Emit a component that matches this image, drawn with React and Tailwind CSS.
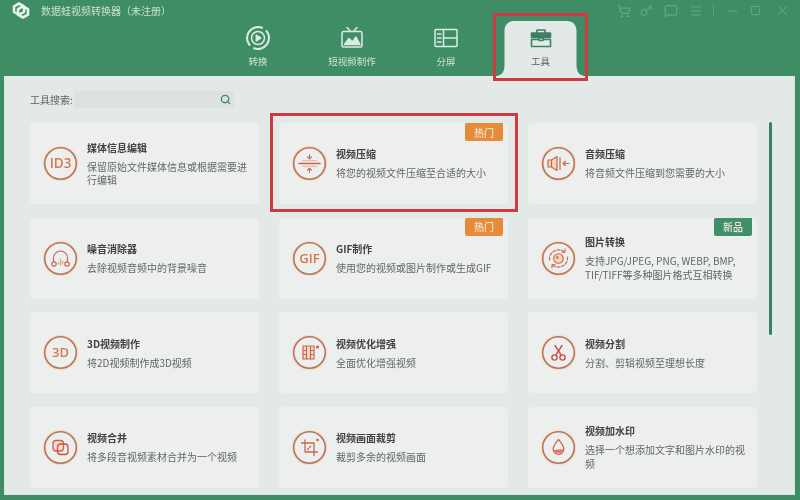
import React from "react";
import { Search, ShoppingCart, Key, MessageSquare, Menu, Minus, Square, X } from "lucide-react";

const R = "#c8684a";
const Ring = ({ children }) => (
  <svg width="37" height="37" viewBox="0 0 37 37" fill="none" className="shrink-0">
    <circle cx="18.5" cy="18.5" r="17" stroke="#f8dcc8" strokeWidth="1.6" />
    <circle cx="18.5" cy="18.5" r="15.8" stroke="#b3795d" strokeWidth="1.6" />
    {children}
  </svg>
);
const Label = ({ t, size = 12 }) => (
  <text x="18.5" y="23" textAnchor="middle" fontSize={size} fontWeight="600" fill="#cf7b4b" fontFamily="'Open Sans', sans-serif">{t}</text>
);
const icons = {
  id3: <Label t="ID3" size={13.5} />,
  gif: <Label t="GIF" size={13} />,
  d3: <Label t="3D" size={13} />,
  compress: (
    <g stroke={R} strokeWidth="1.1" strokeLinecap="round" strokeLinejoin="round">
      <path d="M8 18.5h21" strokeWidth="1.4" />
      <path d="M11.500 15.800h14M11.500 21.200h14" stroke="#e9b08f" />
      <path d="M18.500 9.500v4M16.500 11.800l2 2 2-2M18.500 27.500v-4M16.500 25.200l2-2 2 2" />
    </g>
  ),
  audio: (
    <g stroke={R} strokeWidth="1.2" strokeLinecap="round" strokeLinejoin="round">
      <path d="M8 15h3.500v7H8zM11.500 15l5.500-3.500v14L11.500 22" fill="#f4d3bf" />
      <path d="M20 12.500v12" />
      <path d="M29 18.500h-6M25.500 16.300l-2.500 2.200 2.500 2.200" />
    </g>
  ),
  noise: (
    <g stroke={R} strokeWidth="1.2" strokeLinecap="round" strokeLinejoin="round">
      <path d="M11.500 21v-3a7 7 0 0 1 14 0v3" />
      <circle cx="12" cy="24" r="2.200" /><circle cx="25" cy="24" r="2.200" />
      <path d="M18.500 19v6M16.500 22.500v1.500M20.500 21v3" stroke="#e0a080" />
    </g>
  ),
  image: (
    <g stroke={R} strokeWidth="1.1" strokeLinecap="round" strokeLinejoin="round">
      <path d="M9.500 20a9.200 9.200 0 0 1 15-8M27.500 17a9.200 9.200 0 0 1-15 8" strokeDasharray="3 1.500" />
      <path d="M25 9v3.200h-3.200M12 28v-3.200h3.200" />
      <circle cx="18.500" cy="18.500" r="4.800" fill="#f4d3bf" />
      <circle cx="17.300" cy="17.500" r="0.800" />
    </g>
  ),
  enhance: (
    <g stroke={R} strokeWidth="1.2" strokeLinejoin="round">
      <path d="M12 12h11v13H12zM15.500 12v13M19.500 12v13M12 16.500h3.500M12 20.500h3.500M19.500 16.500H23M19.500 20.500H23" fill="#f7dccb" />
      <circle cx="26.500" cy="13" r="1" fill={R} />
    </g>
  ),
  cut: (
    <g stroke="#cc4f45" strokeWidth="1.4" strokeLinecap="round">
      <circle cx="14.500" cy="23.500" r="2.600" /><circle cx="22.500" cy="23.500" r="2.600" />
      <path d="M15.800 21.200L22 11.500M21.200 21.200L15 11.500" />
    </g>
  ),
  merge: (
    <g stroke={R} strokeWidth="1.3">
      <rect x="11" y="11.500" width="10.500" height="10.500" rx="3" fill="#f7dccb" />
      <rect x="15.500" y="15" width="10.500" height="10.500" rx="3" stroke="#cc4f45" />
    </g>
  ),
  crop: (
    <g stroke={R} strokeWidth="1.3" strokeLinecap="round" strokeLinejoin="round">
      <path d="M14 11v12h12.500M10.500 14H23v12.500" />
      <path d="M16.500 20.500l4-4" strokeDasharray="1.500 1.500" />
      <circle cx="26.500" cy="11" r="0.700" fill={R} />
    </g>
  ),
  drop: (
    <g strokeLinejoin="round">
      <path d="M18.500 10.500c2.800 3.700 5.300 6.300 5.300 9.500a5.300 5.300 0 0 1-10.600 0c0-3.200 2.500-5.800 5.300-9.500z" stroke={R} strokeWidth="1.3" />
      <path d="M13.500 20.500c1.800 1.300 3.500.2 5 0s3.300.5 4.900-.2a5.200 5.200 0 0 1-9.900.2z" fill="#dc7468" />
    </g>
  ),
};

const cards = [
  { i: "id3", t: "媒体信息编辑", d: "保留原始文件媒体信息或根据需要进行编辑" },
  { i: "compress", t: "视频压缩", d: "将您的视频文件压缩至合适的大小", b: "热门", frame: true },
  { i: "audio", t: "音频压缩", d: "将音频文件压缩到您需要的大小" },
  { i: "noise", t: "噪音消除器", d: "去除视频音频中的背景噪音" },
  { i: "gif", t: "GIF制作", d: "使用您的视频或图片制作或生成GIF", b: "热门" },
  { i: "image", t: "图片转换", d: "支持JPG/JPEG, PNG, WEBP, BMP, TIF/TIFF等多种图片格式互相转换", b: "新品", green: true },
  { i: "d3", t: "3D视频制作", d: "将2D视频制作成3D视频" },
  { i: "enhance", t: "视频优化增强", d: "全面优化增强视频" },
  { i: "cut", t: "视频分割", d: "分割、剪辑视频至理想长度" },
  { i: "merge", t: "视频合并", d: "将多段音视频素材合并为一个视频" },
  { i: "crop", t: "视频画面裁剪", d: "裁剪多余的视频画面" },
  { i: "drop", t: "视频加水印", d: "选择一个想添加文字和图片水印的视频" },
];

const Card = ({ c }) => (
  <div className="relative flex items-center gap-[8px] pl-[12px] bg-[#edeeee] rounded-[4px]">
    <Ring>{icons[c.i]}</Ring>
    <div className="w-[163px]">
      <div className="text-[10px] leading-[14px] font-bold text-[#404342] mb-[5px]">{c.t}</div>
      <div className="text-[10px] leading-[13.500px] text-[#626766]">{c.d}</div>
    </div>
    {c.b && (
      <div className={`absolute top-0 right-[5px] w-[38px] h-[18px] rounded-b-[2px] rounded-tl-[2px] flex items-center justify-center text-[10px] font-medium text-[#f6e7d8] ${c.green ? "bg-[#3f9068]" : "bg-[#e58b3a]"}`}>{c.b}</div>
    )}
    {c.frame && <div className="absolute -left-[9px] -right-[10px] -top-[10px] -bottom-[8px] border-[3px] border-[#cd3a42]" />}
  </div>
);

const stroke = { fill: "none", stroke: "#dcebe3", strokeWidth: 1.5, strokeLinecap: "round", strokeLinejoin: "round" };

const tabs = [
  {
    l: "转换",
    s: (
      <svg width="26" height="26" viewBox="0 0 26 26" {...stroke}>
        <path d="M4.500 20A11 11 0 0 1 17 2.800M21.500 6A11 11 0 0 1 9 23.200" strokeWidth="2" />
        <circle cx="13" cy="13" r="6.500" />
        <path d="M11.300 10.200l4.400 2.800-4.400 2.800z" fill="#dcebe3" />
      </svg>
    ),
  },
  {
    l: "短视频制作",
    s: (
      <svg width="24" height="24" viewBox="0 0 24 24" {...stroke}>
        <rect x="2" y="5.500" width="20" height="15.500" rx="1.500" />
        <path d="M7 1.500l3.500 4M17 1.500l-3.500 4" />
        <path d="M4.500 18.500l4.500-6 3.500 3.500 3.500-5 4 7.500z" fill="#dcebe3" />
      </svg>
    ),
  },
  {
    l: "分屏",
    s: (
      <svg width="24" height="20" viewBox="0 0 24 20" {...stroke}>
        <rect x="1" y="1.500" width="22" height="17" rx="1" />
        <path d="M9.500 1.500v17M9.500 10H23M3.500 6h3.500M3.500 10h3.500M3.500 14h3.500" />
      </svg>
    ),
  },
];

export default function App() {
  return (
    <div className="w-[800px] h-[500px] overflow-hidden bg-[#3f8d64] blur-[0.5px] font-['Noto_Sans_CJK_SC','Noto_Sans',sans-serif]">
      <header className="h-[76px]">
        <div className="h-[21px] flex items-center pl-[12px] pr-[10px]">
          <svg width="18" height="19" viewBox="0 0 18 19" fill="none" stroke="#e9f2ed" strokeWidth="2.600" strokeLinejoin="round">
            <path d="M7 2.500l5 2.800v5.600l-5 2.800-5-2.800V5.300z" />
            <path d="M11 5.300l5 2.800v5.600l-5 2.800-5-2.800V8.100z" />
          </svg>
          <span className="ml-[11px] text-[10px] text-[#c9e0d3] tracking-normal">数据蛙视频转换器（未注册）</span>
          <div className="ml-auto flex items-center text-[#7fb79a]">
            <ShoppingCart size={14} strokeWidth={1.300} className="mr-[9px]" />
            <Key size={13} strokeWidth={1.300} className="mr-[11px]" />
            <MessageSquare size={14} strokeWidth={1.300} className="mr-[11px]" />
            <Menu size={14} strokeWidth={1.200} className="mr-[10px]" />
            <div className="w-px h-[13px] bg-[#5a9e7c] mr-[12px]" />
            <Minus size={14} strokeWidth={1.200} className="mr-[10px]" />
            <Square size={11} strokeWidth={1.300} className="mr-[14px]" />
            <X size={15} strokeWidth={1.200} />
          </div>
        </div>
        <div className="flex h-[55px] pl-[211px]">
          {tabs.map((t) => (
            <div key={t.l} className="w-[94px] flex flex-col items-center">
              <div className="h-[34px] flex items-center justify-center">{t.s}</div>
              <div className="mt-[-1px] text-[9.500px] leading-[14px] text-[#cfe3d8]">{t.l}</div>
            </div>
          ))}
          <div className="relative z-10 w-[95px] flex flex-col items-center">
            <svg className="absolute inset-0" width="95" height="55" viewBox="0 0 95 55">
              <path d="M4 55c5-1 7-4 7.500-10V10C11.500 4 15 0 21 0h53c6 0 9.500 4 9.500 10v35c.5 6 2.500 9 7.500 10z" fill="#e3e9e7" />
            </svg>
            <div className="relative h-[34px] flex items-center justify-center">
              <svg width="22" height="20" viewBox="0 0 22 20" fill="none" stroke="#3f7f62" strokeWidth="1.600" strokeLinejoin="round">
                <path d="M7 5V2h8v3" />
                <path d="M1.500 5h19v4.500h-19z" fill="#3f7f62" />
                <path d="M1.500 11.500h19V18.500h-19z" />
                <path d="M9 10h4v2.500H9z" fill="#e3e9e7" />
              </svg>
            </div>
            <div className="relative mt-[-1px] text-[9.500px] leading-[14px] text-[#56675f]">工具</div>
            <div className="absolute -top-[8px] -bottom-[5px] inset-x-0 border-[3px] border-[#cd3a42]" />
          </div>
        </div>
      </header>
      <main className="ml-[4px] mr-[5px] h-[419px] bg-[#e3e9e7] border-[1.500px] border-t-0 border-[#d3e8db] overflow-hidden">
        <div className="h-[47px] pl-[25px] flex items-center">
          <span className="text-[10px] text-[#5f6463] w-[44px]">工具搜索:</span>
          <div className="w-[160px] h-[17px] bg-[#dde2e0] flex items-center justify-end pr-[3px]">
            <Search size={11} strokeWidth={3} className="text-[#3f8d64]" />
          </div>
        </div>
        <div className="flex pl-[25px]">
          <div className="grid grid-cols-[229px_229px_229px] auto-rows-[81px] gap-x-[20px] gap-y-[13.670px]">
            {cards.map((c) => (
              <Card key={c.t} c={c} />
            ))}
          </div>
          <div className="ml-[12px] w-[3px] h-[213px] -mt-px rounded-full bg-[#3b8060]" />
        </div>
      </main>
    </div>
  );
}
